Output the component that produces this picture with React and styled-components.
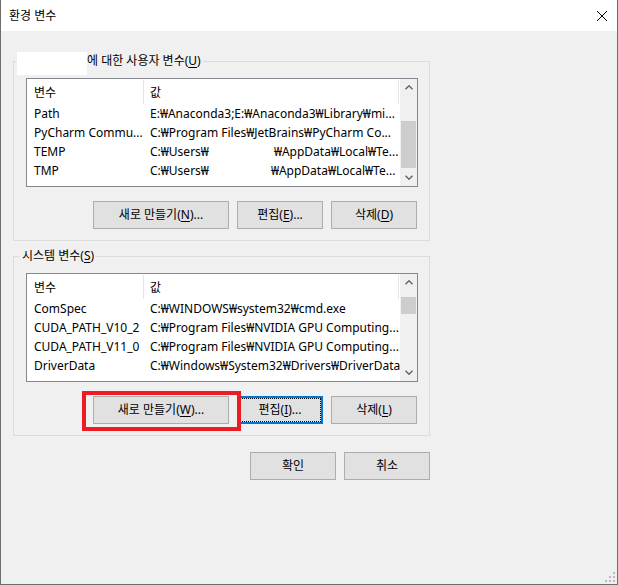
import React from "react";
import styled, { css, createGlobalStyle } from "styled-components";

const GlobalStyle = createGlobalStyle`
  html, body {
    margin: 0;
    padding: 0;
    background: #f0f0f0;
  }
`;

const Window = styled.div`
  position: relative;
  width: 618px;
  height: 585px;
  box-sizing: border-box;
  background: #f0f0f0;
  border: 1px solid #6e6e6e;
  border-top: none;
  font-family: "Noto Sans", "Noto Sans CJK KR", sans-serif;
  font-size: 12px;
  color: #000;
  overflow: hidden;
`;

const TitleBar = styled.div`
  height: 31px;
  background: #fff;
  display: flex;
  align-items: center;
  justify-content: space-between;
  padding: 0 10px 0 8px;
`;

const Title = styled.span`
  line-height: 16px;
`;

const Body = styled.div`
  padding: 22px 0 0 12px;
`;

const Group = styled.fieldset`
  margin: ${(p) => p.$top || 0}px 0 0;
  padding: 0 11px 11px 12px;
  width: 417px;
  min-width: 0;
  box-sizing: border-box;
  border: 1px solid #dcdcdc;
`;

const Legend = styled.legend`
  padding: 0 2px;
  margin-left: -6px;
  height: 16px;
  line-height: 16px;
`;

const Redact = styled.span`
  display: inline-block;
  vertical-align: top;
  width: 70px;
  height: 23px;
  margin: -1px 0 -6px -5px;
  background: #fff;
`;

const Key = styled.span`
  text-decoration: underline;
  text-underline-offset: 2px;
`;

const List = styled.div`
  margin-top: 9px;
  height: 109px;
  box-sizing: border-box;
  border: 1px solid #828790;
  background: #fff;
  display: flex;
`;

const ListBody = styled.div`
  flex: 1;
  min-width: 0;
  overflow: hidden;
`;

const HeaderRow = styled.div`
  display: flex;
  height: 25px;
`;

const HeaderCell = styled.div`
  width: ${(p) => p.$w}px;
  box-sizing: border-box;
  margin-top: 1px;
  padding-left: ${(p) => p.$pad}px;
  border-right: 1px solid #e5e5e5;
  display: flex;
  align-items: center;
`;

const Row = styled.div`
  display: flex;
  align-items: center;
  height: 19px;
  white-space: nowrap;
`;

const NameCell = styled.div`
  width: 117px;
  box-sizing: border-box;
  padding-left: 7px;
  overflow: hidden;
`;

const ValueCell = styled.div`
  flex: 1;
  min-width: 0;
  padding-left: 6px;
  overflow: hidden;
`;

const Hidden = styled.span`
  display: inline-block;
  width: ${(p) => p.$w}px;
`;

const ScrollBar = styled.div`
  width: 17px;
  background: #f0f0f0;
  display: flex;
  flex-direction: column;
`;

const ArrowBox = styled.div`
  height: 17px;
  display: flex;
  align-items: center;
  justify-content: center;
`;

const Track = styled.div`
  flex: 1;
`;

const Thumb = styled.div`
  margin: ${(p) => p.$offset}px 1px 0;
  height: ${(p) => p.$h}px;
  background: #cdcdcd;
`;

const ButtonRow = styled.div`
  display: flex;
  justify-content: flex-end;
  gap: 8px;
  margin-top: 14px;
  padding-right: 1px;
`;

const Button = styled.button`
  width: ${(p) => p.$w || 86}px;
  height: 28px;
  box-sizing: border-box;
  margin: 0;
  padding: 0;
  background: #e1e1e1;
  border: 1px solid #adadad;
  font: inherit;
  color: #000;
  line-height: 16px;
  ${(p) =>
    p.$focused &&
    css`
      border: 2px solid #0078d7;
      outline: 1px dotted #000;
      outline-offset: -3px;
    `}
`;

const Marked = styled.span`
  position: relative;
  display: flex;

  &::after {
    content: "";
    position: absolute;
    inset: -5px -12px -7px -11px;
    border: 4px solid #ed1c24;
    z-index: 1;
    pointer-events: none;
  }
`;

const Footer = styled.div`
  width: 417px;
  display: flex;
  justify-content: flex-end;
  gap: 8px;
  margin-top: 16px;
`;

const Grip = styled.svg`
  position: absolute;
  right: 2px;
  bottom: 2px;
`;

const CloseIcon = () => (
  <svg width="10" height="10" viewBox="0 0 10 10">
    <path d="M0 0L10 10M10 0L0 10" stroke="#000" strokeWidth="1" />
  </svg>
);

const Chevron = ({ down }) => (
  <svg width="8" height="5" viewBox="0 0 8 5">
    <path
      d={down ? "M0.5 0.8L4 4.2L7.5 0.8" : "M0.5 4.2L4 0.8L7.5 4.2"}
      fill="none"
      stroke="#606060"
      strokeWidth="1.4"
    />
  </svg>
);

const VarList = ({ rows, thumbOffset, thumbHeight }) => (
  <List>
    <ListBody>
      <HeaderRow>
        <HeaderCell $w={117} $pad={7}>변수</HeaderCell>
        <HeaderCell $w={255} $pad={6}>값</HeaderCell>
      </HeaderRow>
      {rows.map((r) => (
        <Row key={r.name}>
          <NameCell>{r.name}</NameCell>
          <ValueCell>{r.value}</ValueCell>
        </Row>
      ))}
    </ListBody>
    <ScrollBar>
      <ArrowBox>
        <Chevron />
      </ArrowBox>
      <Track>
        <Thumb $offset={thumbOffset} $h={thumbHeight} />
      </Track>
      <ArrowBox>
        <Chevron down />
      </ArrowBox>
    </ScrollBar>
  </List>
);

const userRows = [
  { name: "Path", value: "E:₩Anaconda3;E:₩Anaconda3₩Library₩mi..." },
  { name: "PyCharm Commu...", value: "C:₩Program Files₩JetBrains₩PyCharm Co..." },
  {
    name: "TEMP",
    value: (
      <>
        C:₩Users₩<Hidden $w={65} />₩AppData₩Local₩Te...
      </>
    ),
  },
  {
    name: "TMP",
    value: (
      <>
        C:₩Users₩<Hidden $w={62} />₩AppData₩Local₩Te...
      </>
    ),
  },
];

const systemRows = [
  { name: "ComSpec", value: "C:₩WINDOWS₩system32₩cmd.exe" },
  { name: "CUDA_PATH_V10_2", value: "C:₩Program Files₩NVIDIA GPU Computing..." },
  { name: "CUDA_PATH_V11_0", value: "C:₩Program Files₩NVIDIA GPU Computing..." },
  { name: "DriverData", value: "C:₩Windows₩System32₩Drivers₩DriverData" },
];

export default function App() {
  return (
    <>
      <GlobalStyle />
      <Window>
        <TitleBar>
          <Title>환경 변수</Title>
          <CloseIcon />
        </TitleBar>
        <Body>
          <Group>
            <Legend>
              <Redact />
              에 대한 사용자 변수(<Key>U</Key>)
            </Legend>
            <VarList rows={userRows} thumbOffset={25} thumbHeight={47} />
            <ButtonRow>
              <Button $w={136}>
                새로 만들기(<Key>N</Key>)...
              </Button>
              <Button>
                편집(<Key>E</Key>)...
              </Button>
              <Button>
                삭제(<Key>D</Key>)
              </Button>
            </ButtonRow>
          </Group>
          <Group $top={7}>
            <Legend>
              시스템 변수(<Key>S</Key>)
            </Legend>
            <VarList rows={systemRows} thumbOffset={6} thumbHeight={17} />
            <ButtonRow>
              <Marked>
                <Button $w={136}>
                  새로 만들기(<Key>W</Key>)...
                </Button>
              </Marked>
              <Button $focused>
                편집(<Key>I</Key>)...
              </Button>
              <Button>
                삭제(<Key>L</Key>)
              </Button>
            </ButtonRow>
          </Group>
          <Footer>
            <Button>확인</Button>
            <Button>취소</Button>
          </Footer>
        </Body>
        <Grip width="10" height="10" viewBox="0 0 10 10">
          <g fill="#bcbcbc">
            <rect x="8" y="0" width="2" height="2" />
            <rect x="4" y="4" width="2" height="2" />
            <rect x="8" y="4" width="2" height="2" />
            <rect x="0" y="8" width="2" height="2" />
            <rect x="4" y="8" width="2" height="2" />
            <rect x="8" y="8" width="2" height="2" />
          </g>
        </Grip>
      </Window>
    </>
  );
}
